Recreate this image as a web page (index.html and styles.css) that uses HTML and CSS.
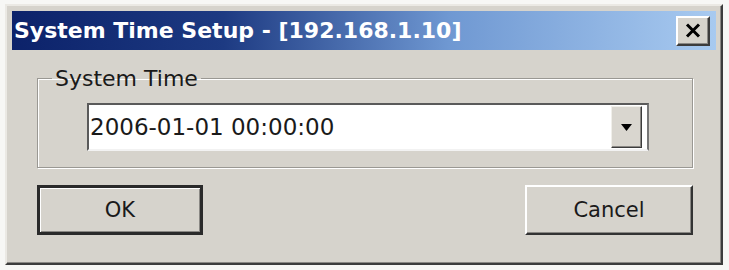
FILE: index.html
```html
<!DOCTYPE html>
<html>
<head>
<meta charset="utf-8">
<link rel="stylesheet" href="styles.css">
</head>
<body>
<div class="window">
  <div class="titlebar">
    <span class="title">System Time Setup - [192.168.1.10]</span>
    <button class="close" aria-label="Close">
      <svg width="16" height="15" viewBox="0 0 16 15"><path d="M2 1.5 L14 13.5 M14 1.5 L2 13.5" stroke="#000" stroke-width="3" fill="none"/></svg>
    </button>
  </div>
  <div class="content">
    <fieldset class="group">
      <legend>System Time</legend>
      <div class="combo">
        <span class="value">2006-01-01 00:00:00</span>
        <span class="drop"><svg width="11" height="7" viewBox="0 0 11 7"><path d="M0 0 H11 L5.5 7 Z" fill="#000"/></svg></span>
      </div>
    </fieldset>
    <div class="buttons">
      <button class="btn default">OK</button>
      <button class="btn">Cancel</button>
    </div>
  </div>
</div>
</body>
</html>
```

FILE: styles.css
```css
html, body {
  margin: 0;
  padding: 0;
  background: #f7f7f5;
}
body {
  font-family: "DejaVu Sans", Tahoma, sans-serif;
  color: #1a1a1a;
}
.window {
  box-sizing: border-box;
  margin: 4px 0 0 5px;
  width: 718px;
  height: 261px;
  background: #d6d3cc;
  border-top: 2px solid #ebe9e4;
  border-left: 2px solid #ebe9e4;
  border-right: 2px solid #3c3c3c;
  border-bottom: 2px solid #3c3c3c;
  box-shadow: inset -1px -1px 0 #8a8884;
  padding: 5px 5px 0 5px;
}
.titlebar {
  height: 39px;
  display: flex;
  align-items: center;
  justify-content: space-between;
  background: linear-gradient(to right, #0c226a 0%, #1d3a82 30%, #6f98d2 62%, #a8caf0 100%);
  padding-left: 2px;
  padding-right: 6px;
}
.title {
  color: #ffffff;
  font-weight: bold;
  font-size: 22px;
  white-space: nowrap;
}
.close {
  box-sizing: border-box;
  width: 34px;
  height: 30px;
  padding: 0;
  margin: 0;
  display: flex;
  align-items: center;
  justify-content: center;
  background: #d6d3cc;
  border: 2px solid;
  border-color: #ffffff #3c3c3c #3c3c3c #ffffff;
  box-shadow: inset -1px -1px 0 #8a8884;
}
.content {
  padding: 16px 23px 0 25px;
}
.group {
  margin: 0;
  padding: 12px 14px 16px 14px;
  border: 1px solid #9a9893;
  box-shadow: inset 1px 1px 0 #ffffff, 1px 1px 0 #ffffff;
}
.group legend {
  font-size: 22px;
  line-height: 25px;
  padding: 0 3px;
}
.combo {
  box-sizing: border-box;
  margin-left: 35px;
  width: 562px;
  height: 48px;
  display: flex;
  align-items: stretch;
  background: #ffffff;
  border: 2px solid;
  border-color: #5a5a5a #767676 #f2f2f2 #5a5a5a;
}
.value {
  flex: 1;
  display: flex;
  align-items: center;
  padding-left: 1px;
  font-size: 23px;
}
.drop {
  box-sizing: border-box;
  width: 31px;
  margin: 1px 5px 1px 0;
  display: flex;
  align-items: center;
  justify-content: center;
  background: #d9d6cf;
  border: 1px solid;
  border-color: #f0efea #3c3c3c #3c3c3c #f0efea;
  box-shadow: inset -1px -1px 0 #8a8884;
}
.buttons {
  display: flex;
  justify-content: space-between;
  margin-top: 17px;
}
.btn {
  box-sizing: border-box;
  width: 168px;
  height: 50px;
  margin: 0;
  padding: 0;
  font-family: "DejaVu Sans", Tahoma, sans-serif;
  font-size: 21px;
  color: #1a1a1a;
  background: #d6d3cc;
  border: 2px solid;
  border-color: #ffffff #333333 #333333 #ffffff;
  box-shadow: inset -1px -1px 0 #8a8884;
}
.btn.default {
  width: 166px;
  border: 3px solid #2a2a2a;
  box-shadow: inset 1px 1px 0 #ffffff, inset -1px -1px 0 #8a8884;
}
```
